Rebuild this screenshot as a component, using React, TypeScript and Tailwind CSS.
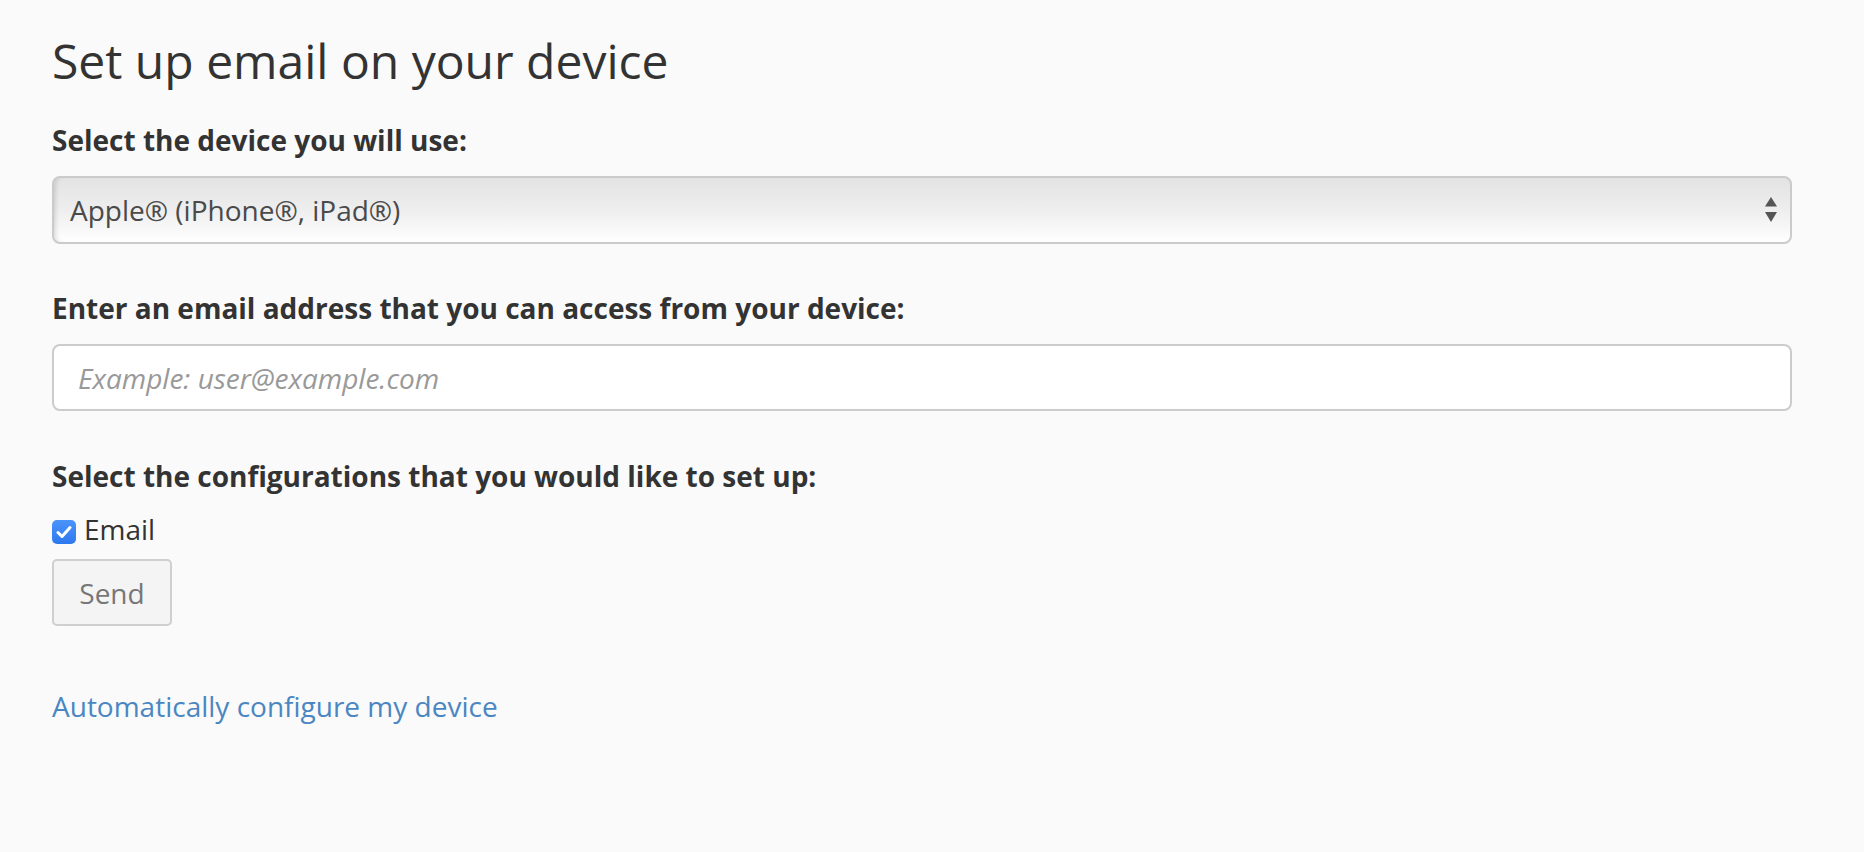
import React from "react";

export default function App() {
  return (
    <div
      className="min-h-[852px] w-full bg-[#fafafa] pl-[52px] pr-[72px] pt-[34px] text-[#333333]"
      style={{ fontFamily: '"Open Sans", "Noto Sans", sans-serif' }}
    >
      <h1 className="text-[48px] leading-[53px] font-normal text-[#333333]">
        Set up email on your device
      </h1>

      <label className="mt-[33px] block text-[28px] leading-[40px] font-bold text-[#333333]">
        Select the device you will use:
      </label>
      <div className="relative mt-[16px] flex h-[68px] w-full items-center rounded-[8px] border-2 border-[#cbcbcb] bg-gradient-to-b from-[#e3e3e3] via-[#eeeeee] to-[#ffffff] pl-[16px] shadow-[inset_5px_0_4px_-3px_rgba(0,0,0,0.12)]">
        <span className="text-[28px] leading-[40px] text-[#4a4a4a]">
          Apple® (iPhone®, iPad®)
        </span>
        <svg
          className="absolute right-[13px] top-1/2 -translate-y-1/2"
          width="12"
          height="26"
          viewBox="0 0 12 26"
        >
          <path d="M6 0 L12 9.5 L0 9.5 Z" fill="#555555" />
          <path d="M0 15 L12 15 L6 25 Z" fill="#555555" />
        </svg>
      </div>

      <label className="mt-[44px] block text-[28px] leading-[40px] font-bold text-[#333333]">
        Enter an email address that you can access from your device:
      </label>
      <div className="mt-[16px] flex h-[67px] w-full items-center rounded-[8px] border-2 border-[#cccccc] bg-white pl-[24px]">
        <span className="text-[28px] leading-[40px] italic text-[#999999]">
          Example: user@example.com
        </span>
      </div>

      <label className="mt-[45px] block text-[28px] leading-[40px] font-bold text-[#333333]">
        Select the configurations that you would like to set up:
      </label>
      <div className="mt-[13px] flex h-[40px] items-start">
        <div className="mt-[11px] flex h-[24px] w-[24px] items-center justify-center rounded-[5px] bg-gradient-to-b from-[#4b93fa] to-[#2e78ef]">
          <svg width="16" height="14" viewBox="0 0 16 14">
            <path
              d="M2 7.5 L6 11.5 L14 2.5"
              fill="none"
              stroke="#ffffff"
              strokeWidth="3"
              strokeLinecap="round"
              strokeLinejoin="round"
            />
          </svg>
        </div>
        <span className="ml-[8px] text-[28px] leading-[40px] text-[#333333]">
          Email
        </span>
      </div>

      <button className="mt-[10px] block h-[67px] w-[120px] rounded-[5px] border-2 border-[#cfcfcf] bg-[#f4f4f4] text-center text-[28px] leading-[40px] text-[#777777]">
        Send
      </button>

      <a
        href="#"
        className="mt-[60px] block w-fit text-[28px] leading-[40px] text-[#4a87c2]"
      >
        Automatically configure my device
      </a>
    </div>
  );
}
